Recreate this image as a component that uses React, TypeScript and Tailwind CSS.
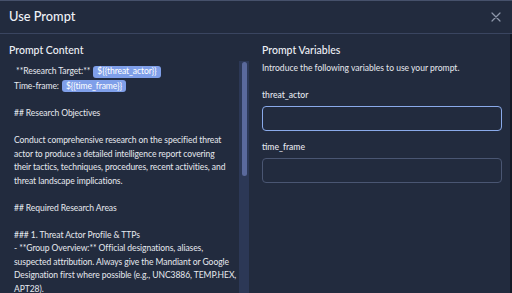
import React from "react";

function Badge({ children }: { children: React.ReactNode }) {
  return (
    <span className="ml-[3px] inline-flex h-[12px] items-center rounded-[3px] bg-[#7f9fe9] px-[4px] text-white">
      {children}
    </span>
  );
}

const lines: string[] = [
  "",
  "## Research Objectives",
  "",
  "Conduct comprehensive research on the specified threat",
  "actor to produce a detailed intelligence report covering",
  "their tactics, techniques, procedures, recent activities, and",
  "threat landscape implications.",
  "",
  "## Required Research Areas",
  "",
  "### 1. Threat Actor Profile & TTPs",
  "- **Group Overview:** Official designations, aliases,",
  "suspected attribution. Always give the Mandiant or Google",
  "Designation first where possible (e.g., UNC3886, TEMP.HEX,",
  "APT28).",
];

export default function App() {
  return (
    <div
      className="flex h-[293px] w-[512px] flex-col overflow-hidden border-t border-[#46516b] bg-[#222b3e] text-[#e6e9ef]"
      style={{ fontFamily: "Lato, sans-serif" }}
    >
      <div className="flex h-[33px] shrink-0 items-center justify-between border-b border-[#3a4560] pl-[9px] pr-[12px]">
        <div className="text-[12.8px] font-medium text-[#eef1f6]">Use Prompt</div>
        <svg width="10" height="10" viewBox="0 0 10 10" className="mr-[-1px]">
          <path d="M1 1L9 9M9 1L1 9" stroke="#8e97aa" strokeWidth="1.2" strokeLinecap="round" />
        </svg>
      </div>
      <div className="flex min-h-0 flex-1">
        <div className="grid min-h-0 flex-1 grid-cols-[240px_240px] gap-x-[13px] pl-[9px] pr-[8px] pt-[10px]">
          <div className="flex min-h-0 flex-col">
            <div className="h-[13px] text-[10.5px] font-medium leading-[13px] text-[#eef1f6]">Prompt Content</div>
            <div className="mt-[4px] flex min-h-0 flex-1">
              <div className="min-w-0 flex-1 pl-[5px] pt-[3px] text-[8.54px] leading-[13.5px] tracking-[-0.07px]">
                <div className="flex h-[15px] items-center whitespace-pre">
                  <span> **Research Target:**</span>
                  <Badge>{"${{threat_actor}}"}</Badge>
                </div>
                <div className="flex h-[14.5px] items-center whitespace-pre">
                  <span>Time-frame:</span>
                  <Badge>{"${{time_frame}}"}</Badge>
                </div>
                {lines.map((l, i) => (
                  <div key={i} className="h-[13.5px] whitespace-pre">
                    {l}
                  </div>
                ))}
              </div>
              <div className="flex w-[10px] shrink-0 justify-center bg-[#2c3856] pt-[1px]">
                <div className="h-[114px] w-[5px] rounded-full bg-[#5a699c]" />
              </div>
            </div>
          </div>
          <div className="flex flex-col">
            <div className="h-[13px] text-[10.5px] font-medium leading-[13px] text-[#eef1f6]">Prompt Variables</div>
            <div className="mt-[5px] text-[8.54px] leading-[12px]">
              Introduce the following variables to use your prompt.
            </div>
            <div className="mt-[15px] text-[8.6px] font-medium leading-[12px]">threat_actor</div>
            <div className="mt-[5px] h-[25px] rounded-[4px] border-[1.5px] border-[#8aaaea] bg-[#222b3e]" />
            <div className="mt-[10px] text-[8.6px] font-medium leading-[12px]">time_frame</div>
            <div className="mt-[5px] h-[25px] rounded-[4px] border border-[#4a5672] bg-[#222b3e]" />
          </div>
        </div>
        <div className="w-[2px] shrink-0 bg-[#141a27]" />
      </div>
    </div>
  );
}
